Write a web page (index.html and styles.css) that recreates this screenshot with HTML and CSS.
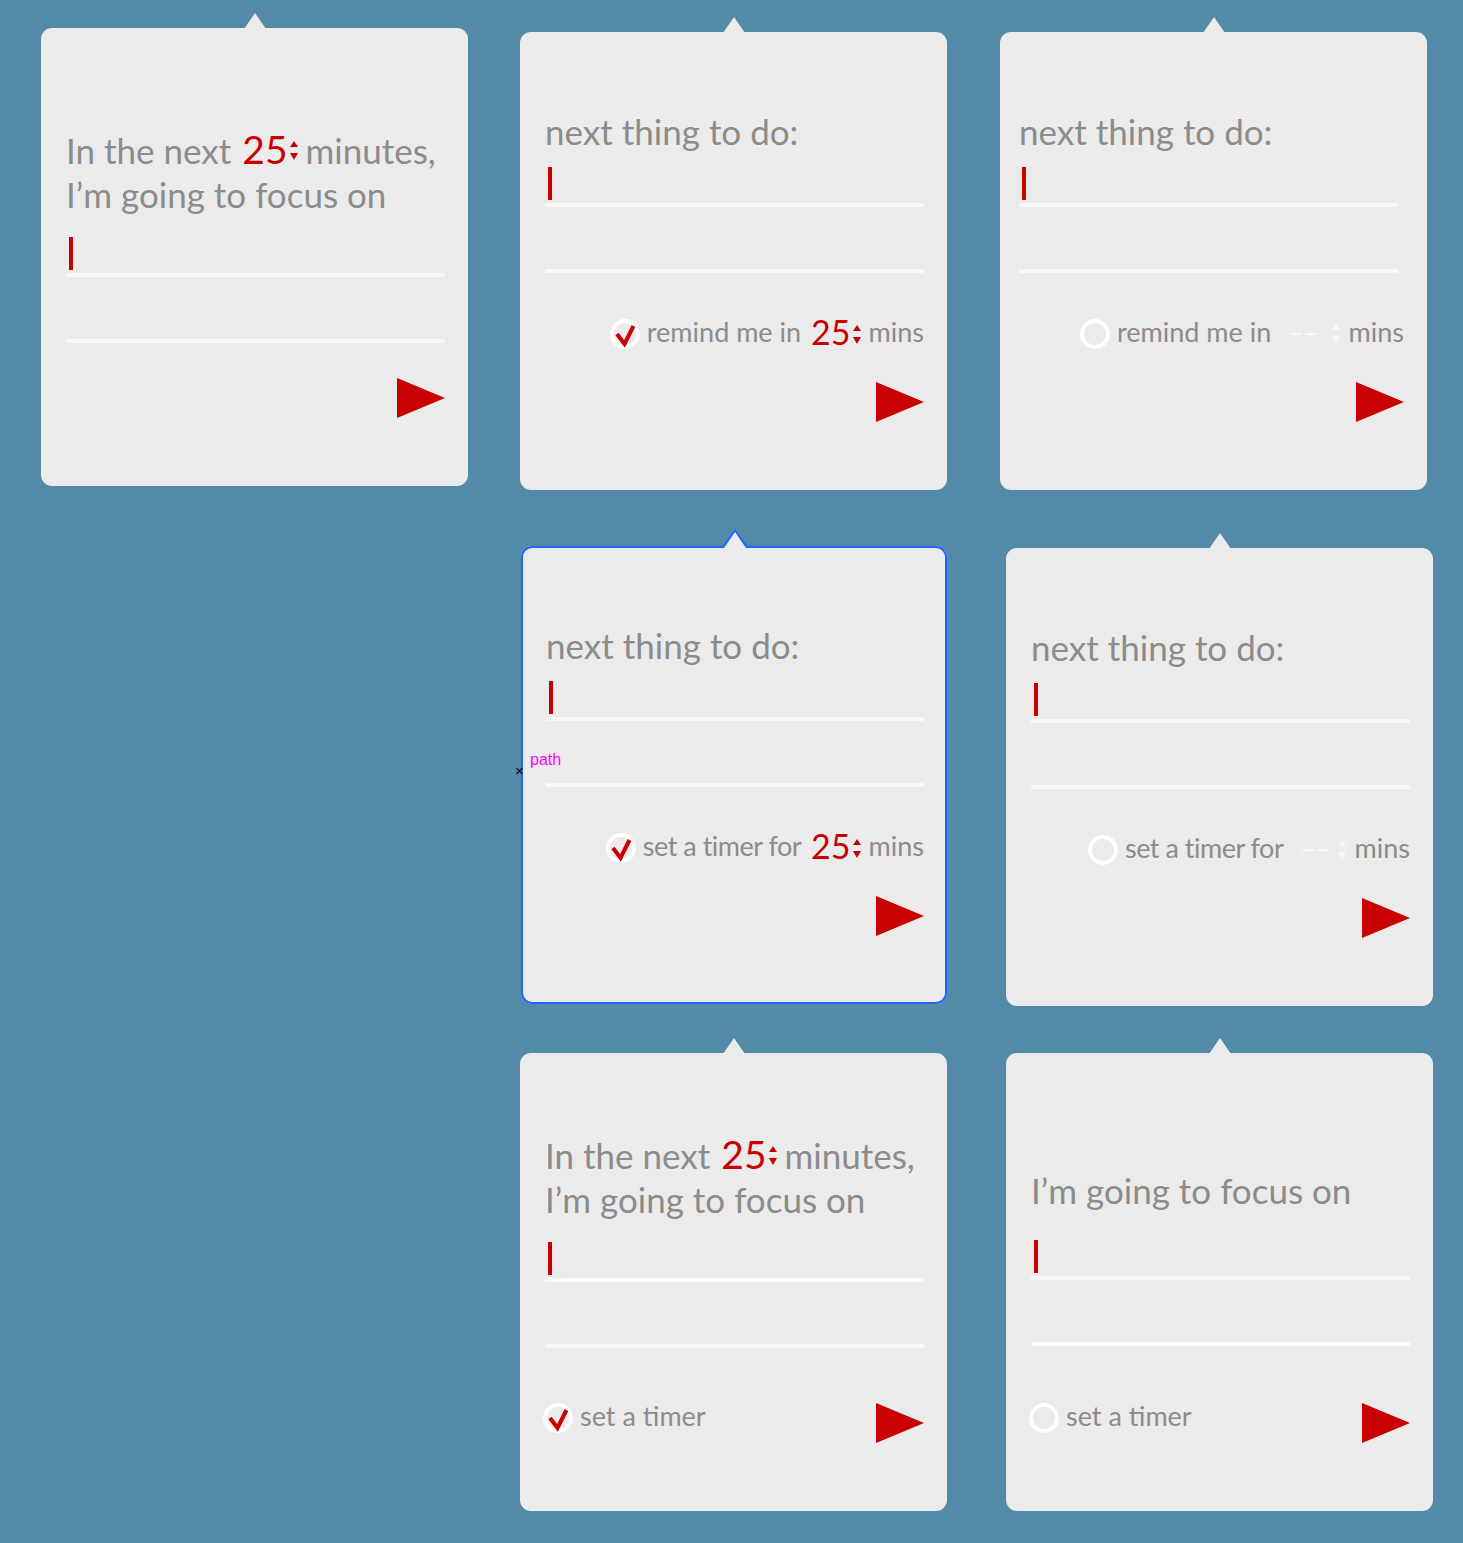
FILE: index.html
```html
<!DOCTYPE html>
<html lang="en">
<head>
    <meta charset="UTF-8">
    <meta name="viewport" content="width=device-width, initial-scale=1.0">
    <title>Focus prompt mockups</title>
    <link rel="stylesheet" href="styles.css">
</head>
<body>
<div class="canvas">

    <!-- first artboard: focus prompt, no options -->
    <section class="card card-a">
        <div class="prompt">In the next <span class="num">25<svg class="spin" viewBox="0 0 8 20"><polygon points="0,6 4,0 8,6"/><polygon points="0,12 8,12 4,19"/></svg></span>minutes,<br>I’m going to focus on</div>
        <div class="field"><span class="caret"></span></div>
        <div class="field blank"></div>
        <div class="footer"><svg class="play" viewBox="0 0 48 40"><polygon points="0,0 48,20 0,40"/></svg></div>
    </section>

    <section class="card card-b">
        <div class="prompt">next thing to do:</div>
        <div class="field"><span class="caret"></span></div>
        <div class="field blank"></div>
        <div class="option">
            <svg class="check" viewBox="0 0 30 30"><circle cx="15" cy="15" r="13"/><polyline points="7,15 14.5,25 23.5,7"/></svg>
            <span class="label">remind me in</span>
            <span class="num small">25<svg class="spin" viewBox="0 0 8 20"><polygon points="0,6 4,0 8,6"/><polygon points="0,12 8,12 4,19"/></svg></span>
            <span class="label">mins</span>
        </div>
        <div class="footer"><svg class="play" viewBox="0 0 48 40"><polygon points="0,0 48,20 0,40"/></svg></div>
    </section>

    <section class="card card-c">
        <div class="prompt nudge">next thing to do:</div>
        <div class="field nudge"><span class="caret"></span></div>
        <div class="field blank nudge"></div>
        <div class="option">
            <svg class="check off" viewBox="0 0 30 30"><circle cx="15" cy="15" r="13"/></svg>
            <span class="label">remind me in</span>
            <span class="empty">––</span>
            <svg class="spin pale" viewBox="0 0 8 20"><polygon points="0,6 4,0 8,6"/><polygon points="0,12 8,12 4,19"/></svg>
            <span class="label">mins</span>
        </div>
        <div class="footer"><svg class="play" viewBox="0 0 48 40"><polygon points="0,0 48,20 0,40"/></svg></div>
    </section>

    <!-- selected artboard -->
    <section class="card card-d selected">
        <div class="prompt">next thing to do:</div>
        <div class="field"><span class="caret"></span></div>
        <div class="field blank"></div>
        <div class="option">
            <svg class="check" viewBox="0 0 30 30"><circle cx="15" cy="15" r="13"/><polyline points="7,15 14.5,25 23.5,7"/></svg>
            <span class="label tight">set a timer for</span>
            <span class="num small">25<svg class="spin" viewBox="0 0 8 20"><polygon points="0,6 4,0 8,6"/><polygon points="0,12 8,12 4,19"/></svg></span>
            <span class="label">mins</span>
        </div>
        <div class="footer"><svg class="play" viewBox="0 0 48 40"><polygon points="0,0 48,20 0,40"/></svg></div>
    </section>

    <section class="card card-e">
        <div class="prompt">next thing to do:</div>
        <div class="field"><span class="caret"></span></div>
        <div class="field blank"></div>
        <div class="option">
            <svg class="check off" viewBox="0 0 30 30"><circle cx="15" cy="15" r="13"/></svg>
            <span class="label tight">set a timer for</span>
            <span class="empty">––</span>
            <svg class="spin pale" viewBox="0 0 8 20"><polygon points="0,6 4,0 8,6"/><polygon points="0,12 8,12 4,19"/></svg>
            <span class="label">mins</span>
        </div>
        <div class="footer"><svg class="play" viewBox="0 0 48 40"><polygon points="0,0 48,20 0,40"/></svg></div>
    </section>

    <section class="card card-f">
        <div class="prompt">In the next <span class="num">25<svg class="spin" viewBox="0 0 8 20"><polygon points="0,6 4,0 8,6"/><polygon points="0,12 8,12 4,19"/></svg></span>minutes,<br>I’m going to focus on</div>
        <div class="field"><span class="caret"></span></div>
        <div class="field blank"></div>
        <div class="footer split">
            <div class="option">
                <svg class="check" viewBox="0 0 30 30"><circle cx="15" cy="15" r="13"/><polyline points="7,15 14.5,25 23.5,7"/></svg>
                <span class="label">set a timer</span>
            </div>
            <svg class="play" viewBox="0 0 48 40"><polygon points="0,0 48,20 0,40"/></svg>
        </div>
    </section>

    <section class="card card-g">
        <div class="prompt">I’m going to focus on</div>
        <div class="field"><span class="caret"></span></div>
        <div class="field blank"></div>
        <div class="footer split">
            <div class="option">
                <svg class="check off" viewBox="0 0 30 30"><circle cx="15" cy="15" r="13"/></svg>
                <span class="label">set a timer</span>
            </div>
            <svg class="play" viewBox="0 0 48 40"><polygon points="0,0 48,20 0,40"/></svg>
        </div>
    </section>

    <!-- smart guide hint left over from the editor -->
    <span class="guide-mark">×</span>
    <span class="guide-label">path</span>
</div>
</body>
</html>
```

FILE: styles.css
```css
body {
    margin: 0;
    background-color: #528aa7;
    font-family: Lato, "Open Sans", sans-serif;
}
.canvas {
    position: relative;
    width: 1463px;
    height: 1543px;
    overflow: hidden;
}

/* artboards */
.card {
    position: absolute;
    width: 427px;
    height: 458px;
    box-sizing: border-box;
    padding: 77px 23px 68px 25px;
    background-color: #ebebeb;
    border-radius: 11px;
    display: flex;
    flex-direction: column;
    color: #8c8c8c;
}
.card::after {
    content: "";
    position: absolute;
    top: -15px;
    left: 203px;
    width: 22px;
    height: 16px;
    background-color: #ebebeb;
    clip-path: polygon(50% 0, 100% 100%, 0 100%);
}
.card.selected {
    box-shadow: inset 0 0 0 2px #1f66ff;
}
.card.selected::before {
    content: "";
    position: absolute;
    top: -17px;
    left: 200px;
    width: 28px;
    height: 19px;
    background-color: #1f66ff;
    clip-path: polygon(50% 0, 100% 100%, 0 100%);
}
.card.selected::after {
    top: -14px;
    height: 16px;
}

.card-a { left: 41px; top: 28px; padding-top: 99px; }
.card-b { left: 520px; top: 32px; }
.card-c { left: 1000px; top: 32px; }
.card-d { left: 521px; top: 546px; width: 426px; }
.card-e { left: 1006px; top: 548px; }
.card-f { left: 520px; top: 1053px; padding-top: 79px; }
.card-g { left: 1006px; top: 1053px; padding-top: 115px; }

.prompt {
    font-size: 35px;
    line-height: 44px;
    white-space: nowrap;
}
.num {
    color: #c80000;
    font-size: 39px;
    margin: 0 8px 0 2px;
}
.num.small {
    font-size: 34px;
    margin: 0 8px 0 10px;
}
.spin {
    width: 8px;
    height: 20px;
    margin-left: 2px;
    fill: #c80000;
    vertical-align: 3px;
}
.num.small .spin {
    vertical-align: 0;
}
.spin.pale {
    fill: #f7f7f7;
    margin: 0 9px 0 0;
    align-self: center;
}

.field {
    height: 36px;
    margin-top: 14px;
    border-bottom: 4px solid #f8f8f8;
}
.card-a .field, .card-f .field { margin-top: 21px; }
.card-g .field { margin-top: 28px; }
.field.blank {
    height: 62px;
    margin-top: 0;
}
.caret {
    display: block;
    width: 4px;
    height: 33px;
    margin-left: 3px;
    background-color: #c80000;
}
.nudge {
    margin-left: -6px;
    margin-right: 6px;
}

/* checkbox line */
.option {
    display: flex;
    align-items: center;
    justify-content: flex-end;
    height: 30px;
    margin-top: 46px;
    font-size: 27px;
    white-space: nowrap;
}
.option .label,
.option .num,
.option .empty {
    margin-bottom: 5px;
}
.label.tight {
    letter-spacing: -0.5px;
}
.check {
    width: 30px;
    height: 30px;
    margin-right: 7px;
    flex-shrink: 0;
}
.check circle {
    fill: none;
    stroke: #ffffff;
    stroke-width: 4;
}
.check polyline {
    fill: none;
    stroke: #c80000;
    stroke-width: 4;
}
.empty {
    color: #fafafa;
    letter-spacing: -1px;
    margin: 0 14px 0 17px;
}
.card-e .empty {
    margin-right: 8px;
}

.footer {
    margin-top: auto;
    display: flex;
    justify-content: flex-end;
}
.footer.split {
    justify-content: space-between;
    align-items: flex-start;
}
.footer .option {
    margin: 0 0 0 -2px;
}
.play {
    width: 48px;
    height: 40px;
    fill: #c80000;
}

.guide-mark {
    position: absolute;
    left: 515px;
    top: 762px;
    font: 15px "Liberation Sans", sans-serif;
    color: #000;
}
.guide-label {
    position: absolute;
    left: 530px;
    top: 751px;
    font: 16px "Liberation Sans", sans-serif;
    color: #ff00ff;
}
```
